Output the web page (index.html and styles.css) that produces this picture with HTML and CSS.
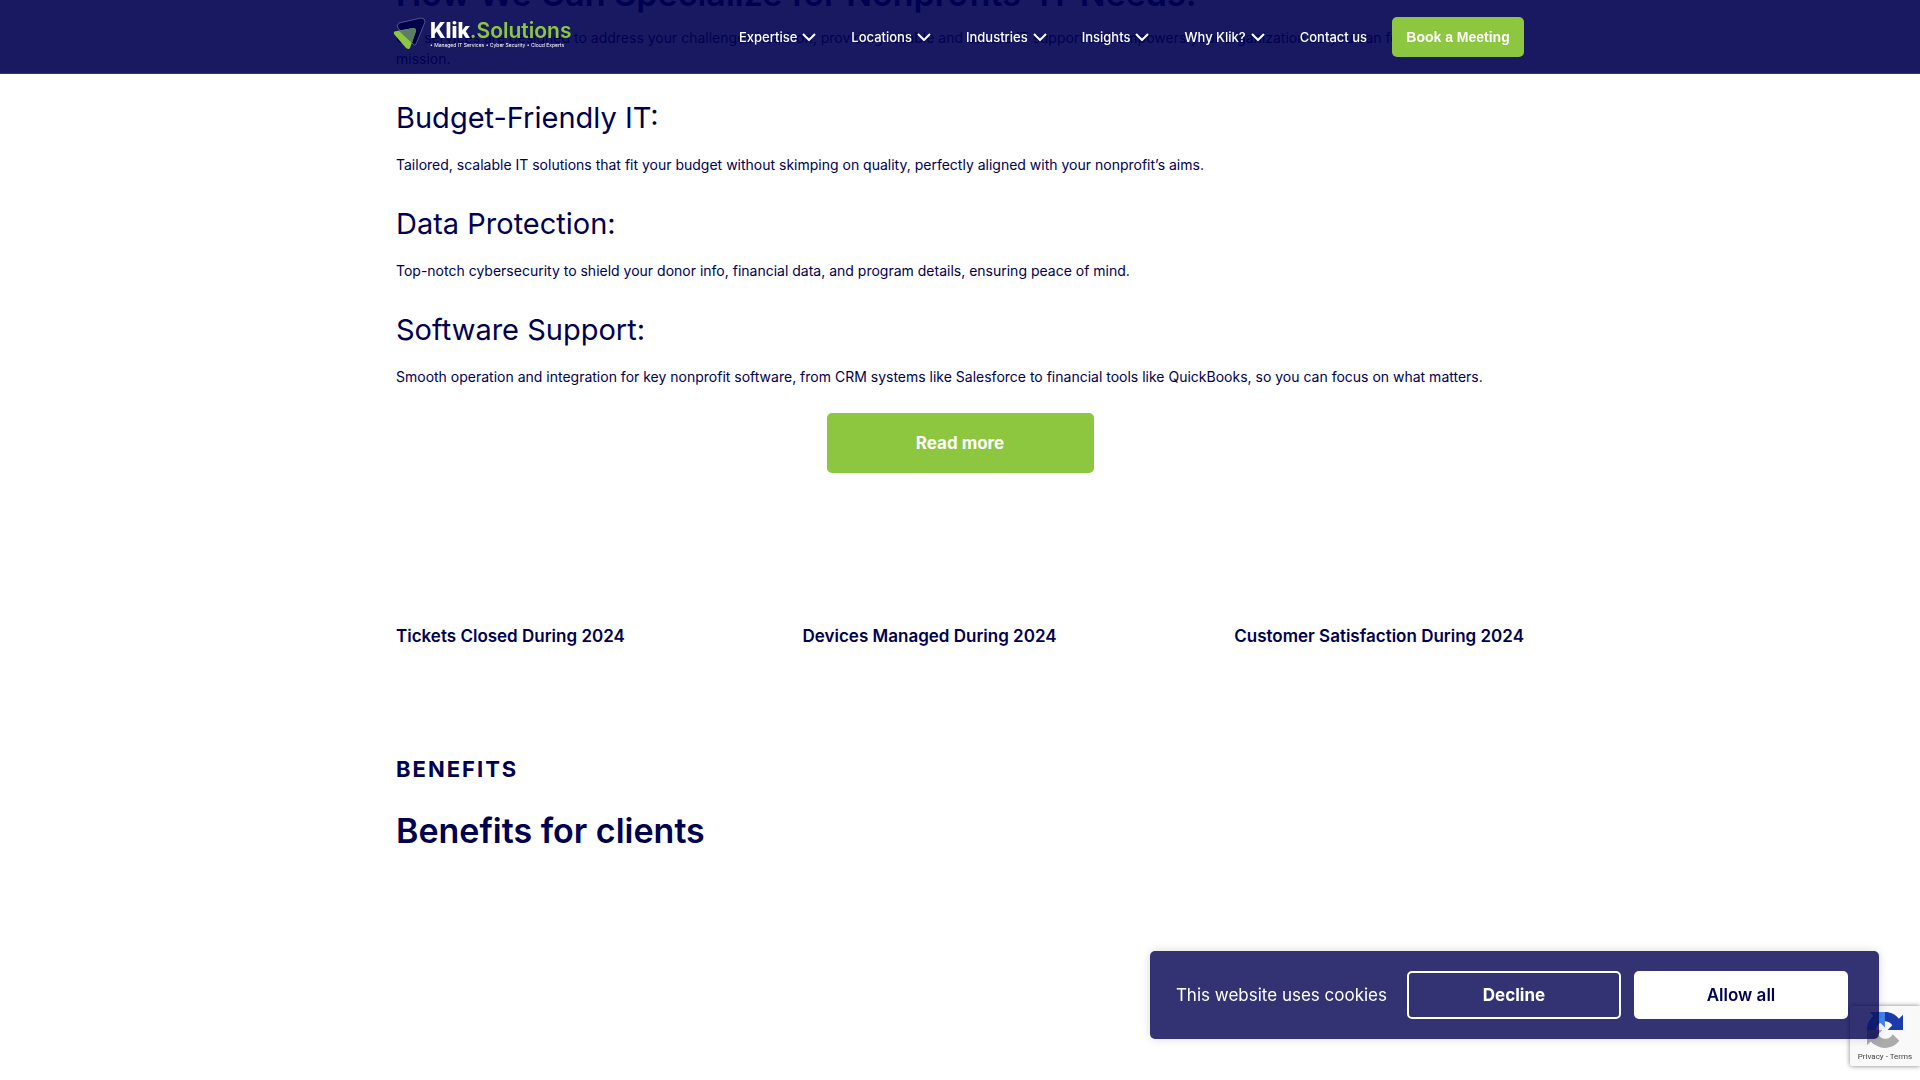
FILE: index.html
```html
<!DOCTYPE html>
<html lang="en">
<head>
<meta charset="utf-8">
<title>Klik Solutions</title>
<link rel="stylesheet" href="styles.css">
</head>
<body>
<header class="site-header">
  <div class="container header-row">
    <a class="logo" href="#" aria-label="Klik Solutions">
      <svg class="logo-mark" viewBox="0 0 34 34" aria-hidden="true">
        <path d="M6 6 Q3 8 5 11 L20 27 Q22 29 23 27 L32 5 Q32 1 28 1 Z" fill="#00004f"/>
        <path d="M1 17 Q0 14 4 14 L20 11 Q23 11 23 14 L17 31 Q16 33 13 31 Z" fill="#8dc63f"/>
        <path d="M6 14 L20 11 Q23 11 23 14 L19 26 Z" fill="#5b7d62"/>
        <path d="M6 6 Q3 8 5 11 L20 27 Q22 29 23 27 L32 5 Q32 1 28 1 Z" fill="none" stroke="#70709c" stroke-width=".7"/>
      </svg>
      <span class="logo-words">
        <span class="logo-name">Klik<span class="logo-accent">.Solutions</span></span>
        <span class="logo-tag">• Managed IT Services • Cyber Security • Cloud Experts</span>
      </span>
    </a>
    <nav class="nav">
      <a href="#">Expertise <svg class="chevron" viewBox="0 0 14 8" aria-hidden="true"><path d="M1 1l6 6 6-6"/></svg></a>
      <a href="#">Locations <svg class="chevron" viewBox="0 0 14 8" aria-hidden="true"><path d="M1 1l6 6 6-6"/></svg></a>
      <a href="#">Industries <svg class="chevron" viewBox="0 0 14 8" aria-hidden="true"><path d="M1 1l6 6 6-6"/></svg></a>
      <a href="#">Insights <svg class="chevron" viewBox="0 0 14 8" aria-hidden="true"><path d="M1 1l6 6 6-6"/></svg></a>
      <a href="#">Why Klik? <svg class="chevron" viewBox="0 0 14 8" aria-hidden="true"><path d="M1 1l6 6 6-6"/></svg></a>
      <a href="#">Contact us</a>
    </nav>
    <button class="button book" type="button">Book a Meeting</button>
  </div>
</header>

<main class="container page">
  <section class="specialize">
    <h2 class="section-title">How We Can Specialize for Nonprofits’ IT Needs:</h2>
    <p>Our services are designed to address your challenges head-on, providing reliable and secure IT support that empowers your organization so you can focus on your mission.</p>
    <h3>Budget-Friendly IT:</h3>
    <p>Tailored, scalable IT solutions that fit your budget without skimping on quality, perfectly aligned with your nonprofit’s aims.</p>
    <h3>Data Protection:</h3>
    <p>Top-notch cybersecurity to shield your donor info, financial data, and program details, ensuring peace of mind.</p>
    <h3>Software Support:</h3>
    <p>Smooth operation and integration for key nonprofit software, from CRM systems like Salesforce to financial tools like QuickBooks, so you can focus on what matters.</p>
    <button class="button read-more" type="button">Read more</button>
  </section>
  <section class="stats">
    <p>Tickets Closed During 2024</p>
    <p>Devices Managed During 2024</p>
    <p>Customer Satisfaction During 2024</p>
  </section>
  <section class="benefits">
    <p class="eyebrow">BENEFITS</p>
    <h2 class="section-title">Benefits for clients</h2>
  </section>
</main>

<aside class="captcha">
  <svg class="captcha-mark" viewBox="0 0 64 64" aria-hidden="true">
    <path d="M64 31.955l-.033-1.37V4.687l-7.16 7.16C50.948 4.674 42.033.093 32.05.093c-10.4 0-19.622 4.96-25.458 12.64l11.736 11.86a15.55 15.55 0 0 1 4.754-5.334c2.05-1.6 4.952-2.906 8.968-2.906.485 0 .86.057 1.135.163 4.976.393 9.288 3.14 11.828 7.124l-8.307 8.307L64 31.953" fill="#1c3aa9"/>
    <path d="M31.862.094l-1.37.033H4.594l7.16 7.16C4.58 13.147 0 22.06 0 32.046c0 10.4 4.96 19.622 12.64 25.458L24.5 45.768a15.55 15.55 0 0 1-5.334-4.754c-1.6-2.05-2.906-4.952-2.906-8.968 0-.485.057-.86.163-1.135.393-4.976 3.14-9.288 7.124-11.828l8.307 8.307L31.86.095" fill="#4285f4"/>
    <path d="M.001 32.045l.033 1.37v25.898l7.16-7.16c5.86 7.173 14.774 11.754 24.76 11.754 10.4 0 19.622-4.96 25.458-12.64l-11.736-11.86a15.55 15.55 0 0 1-4.754 5.334c-2.05 1.6-4.952 2.906-8.968 2.906-.485 0-.86-.057-1.135-.163-4.976-.393-9.288-3.14-11.828-7.124l8.307-8.307c-10.522.04-22.4.066-27.295-.005" fill="#ababab"/>
  </svg>
  <span class="captcha-links"><a href="#">Privacy</a> - <a href="#">Terms</a></span>
</aside>

<section class="cookies" aria-label="Cookies">
  <p>This website uses cookies</p>
  <button class="button decline" type="button">Decline</button>
  <button class="button allow" type="button">Allow all</button>
</section>
</body>
</html>
```
FILE: styles.css
```css
* { box-sizing: border-box; }
body {
  margin: 0;
  overflow: hidden;
  background: #fff;
  color: #000050;
  font: 14px/21px Inter, "Liberation Sans", sans-serif;
}
a { color: inherit; text-decoration: none; }
h2, h3, p { margin: 0; }
.container { width: 100%; max-width: 1128px; margin: 0 auto; }
.button {
  border: 0;
  border-radius: 5px;
  font: 700 17px/24px Inter, "Liberation Sans", sans-serif;
  color: #fff;
  cursor: pointer;
}

.site-header {
  position: fixed;
  inset: 0 0 auto;
  z-index: 2;
  padding: 17px 0 16px;
  background: rgba(0, 0, 80, .9);
  border-bottom: 1px solid #33337a;
}
.header-row { display: flex; align-items: center; }
.logo { display: flex; align-items: center; align-self: flex-start; margin-left: -3px; }
.logo-mark { width: 34px; height: 34px; }
.logo-words { display: flex; flex-direction: column; margin-left: 3px; color: #fff; }
.logo-name { font-size: 21px; line-height: 22px; font-weight: 800; }
.logo-accent { color: #8dc63f; font-weight: 600; }
.logo-tag { font-size: 5px; line-height: 6px; }
.nav { display: flex; gap: 35px; margin-left: auto; color: #fff; font-size: 13px; line-height: 20px; font-weight: 500; }
.nav a { display: flex; align-items: center; gap: 5px; }
.chevron { width: 14px; height: 8px; fill: none; stroke: #fff; stroke-width: 2; }
.book {
  width: 132px;
  height: 40px;
  margin-left: 25px;
  background: #8dc63f;
  font: 700 14px/20px "Liberation Sans", sans-serif;
}

.page { margin-top: -28px; }
.section-title { font-size: 34px; line-height: 44px; font-weight: 600; }
.specialize { display: flex; flex-direction: column; }
.specialize .section-title { margin-bottom: 11px; }
.specialize h3 { margin: 29px 0 16px; font-size: 29px; line-height: 40px; font-weight: 400; }
.read-more { align-self: center; width: 267px; height: 60px; margin-top: 26px; background: #8dc63f; }
.stats {
  display: flex;
  justify-content: space-between;
  margin-top: 151px;
  font-size: 17px;
  line-height: 24px;
  font-weight: 600;
}
.benefits { margin-top: 105px; }
.eyebrow { margin-bottom: 24px; font-size: 22px; line-height: 32px; font-weight: 700; letter-spacing: 2px; }

.captcha {
  position: fixed;
  right: 0;
  bottom: 14px;
  width: 70px;
  height: 60px;
  display: flex;
  flex-direction: column;
  align-items: center;
  padding-top: 6px;
  background: #f9f9f9;
  border-radius: 2px 0 0 2px;
  box-shadow: 0 0 5px #808080;
  color: #444;
}
.captcha-mark { width: 38px; height: 38px; }
.captcha-links { font: 8px/18px Roboto, sans-serif; white-space: nowrap; }

.cookies {
  position: fixed;
  right: 41px;
  bottom: 41px;
  z-index: 3;
  display: flex;
  align-items: center;
  padding: 20px 31px 20px 26px;
  background: rgba(0, 0, 80, .8);
  border-radius: 5px;
  box-shadow: 0 0 10px rgba(0, 0, 0, .15);
  color: #fff;
  font-size: 17px;
}
.decline, .allow { width: 214px; height: 48px; }
.decline { margin: 0 13px 0 20px; background: transparent; border: 2px solid #fff; }
.allow { background: #fff; color: #000050; font-weight: 600; }
```
